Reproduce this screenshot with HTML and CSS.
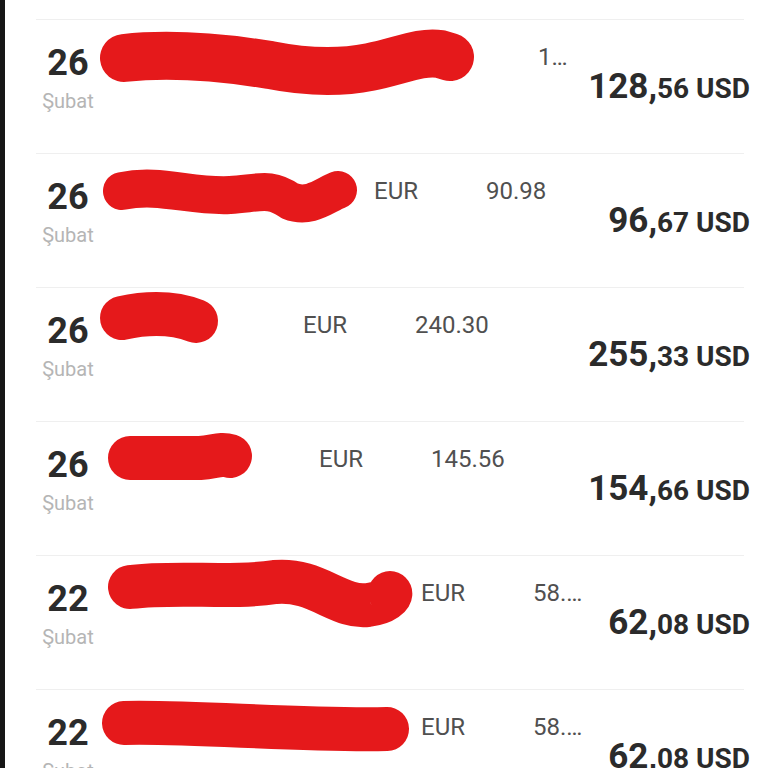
FILE: index.html
```html
<!DOCTYPE html>
<html>
<head>
  <title>Hareketler</title>
  <meta charset="utf-8">
  <link rel="stylesheet" href="styles.css">
</head>
<body>
  <div class="screen">
    <div class="edge"></div>
    <ul class="list">
      <li class="tx">
        <div class="date"><span class="day">26</span><span class="month">Şubat</span></div>
        <div class="body">
          <div class="meta">
            <svg class="scribble wide" width="426" height="24" viewBox="0 0 426 24" overflow="visible"><path d="M24 13 C70 8 120 12 170 20 C210 28 240 28 270 22 C300 16 320 6 340 9 L350 12"/></svg>
            <span class="orig">1…</span>
          </div>
          <div class="amount"><span class="int">128,</span>56 USD</div>
        </div>
      </li>
      <li class="tx">
        <div class="date"><span class="day">26</span><span class="month">Şubat</span></div>
        <div class="body">
          <div class="meta">
            <svg class="scribble thin" width="262" height="24" viewBox="0 0 262 24" overflow="visible"><path d="M22 12 C60 4 90 18 130 16 C160 14 170 8 190 22 C210 30 225 16 238 11"/></svg>
            <span class="cur">EUR</span>
            <span class="orig">90.98</span>
          </div>
          <div class="amount"><span class="int">96,</span>67 USD</div>
        </div>
      </li>
      <li class="tx">
        <div class="date"><span class="day">26</span><span class="month">Şubat</span></div>
        <div class="body">
          <div class="meta">
            <svg class="scribble" width="191" height="24" viewBox="0 0 191 24" overflow="visible"><path d="M22 5 C45 0 70 -2 96 8"/></svg>
            <span class="cur">EUR</span>
            <span class="orig">240.30</span>
          </div>
          <div class="amount"><span class="int">255,</span>33 USD</div>
        </div>
      </li>
      <li class="tx">
        <div class="date"><span class="day">26</span><span class="month">Şubat</span></div>
        <div class="body">
          <div class="meta">
            <svg class="scribble" width="207" height="24" viewBox="0 0 207 24" overflow="visible"><path d="M30 11 L100 11 C115 10 120 6 130 9"/></svg>
            <span class="cur">EUR</span>
            <span class="orig">145.56</span>
          </div>
          <div class="amount"><span class="int">154,</span>66 USD</div>
        </div>
      </li>
      <li class="tx">
        <div class="date"><span class="day">22</span><span class="month">Şubat</span></div>
        <div class="body">
          <div class="meta">
            <svg class="scribble" width="309" height="24" viewBox="0 0 309 24" overflow="visible"><path d="M30 6 C80 0 130 8 175 1 C215 -3 240 28 268 24 C285 22 292 14 290 12"/></svg>
            <span class="cur">EUR</span>
            <span class="orig">58.…</span>
          </div>
          <div class="amount"><span class="int">62,</span>08 USD</div>
        </div>
      </li>
      <li class="tx">
        <div class="date"><span class="day">22</span><span class="month">Şubat</span></div>
        <div class="body">
          <div class="meta">
            <svg class="scribble" width="309" height="24" viewBox="0 0 309 24" overflow="visible"><path d="M24 8 C90 6 200 16 287 14"/></svg>
            <span class="cur">EUR</span>
            <span class="orig">58.…</span>
          </div>
          <div class="amount"><span class="int">62,</span>08 USD</div>
        </div>
      </li>
    </ul>
  </div>
</body>
</html>
```

FILE: styles.css
```css
* {
  box-sizing: border-box;
}
body {
  margin: 0;
  font-family: Roboto, "Liberation Sans", sans-serif;
  background-color: #fff;
  overflow: hidden;
}
.screen {
  display: flex;
  height: 768px;
}
.edge {
  flex: none;
  width: 5px;
  background-color: #161616;
}
.list {
  list-style: none;
  margin: 0;
  padding: 19px 0 0 31px;
}
.tx {
  display: flex;
  width: 708px;
  height: 134px;
  padding-top: 25px;
  border-top: 1px solid #efefef;
}
.date {
  flex: none;
  width: 64px;
  display: flex;
  flex-direction: column;
  align-items: center;
}
.day {
  font-size: 36px;
  line-height: 36px;
  font-weight: 700;
  color: #2b2b2b;
}
.month {
  margin-top: 8px;
  font-size: 20px;
  line-height: 24px;
  color: #b5b5b5;
}
.body {
  flex: 1;
  display: flex;
  flex-direction: column;
}
.meta {
  display: flex;
  align-items: flex-start;
  height: 24px;
  font-size: 24px;
  line-height: 24px;
  color: #505050;
  white-space: nowrap;
}
.scribble {
  flex: none;
  margin-right: 12px;
  overflow: visible;
}
.scribble path {
  fill: none;
  stroke: #e5191b;
  stroke-width: 44;
  stroke-linecap: round;
  stroke-linejoin: round;
}
.scribble.thin path {
  stroke-width: 38;
}
.scribble.wide path {
  stroke-width: 48;
}
.cur {
  flex: none;
  width: 112px;
}
.amount {
  align-self: flex-end;
  margin-right: -6px;
  font-size: 28px;
  line-height: 36px;
  font-weight: 700;
  color: #2b2b2b;
}
.amount .int {
  font-size: 35px;
}
```
